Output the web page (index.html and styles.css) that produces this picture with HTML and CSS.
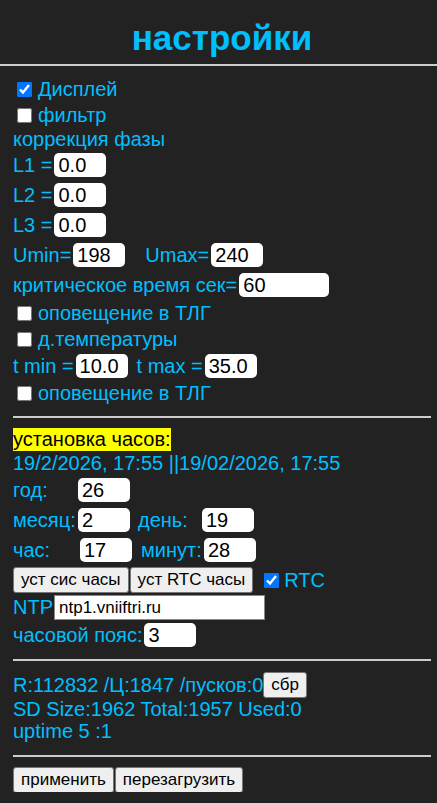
FILE: index.html
```html
<!DOCTYPE html>
<html lang="ru">
   <head>
      <meta charset="UTF-8" />
      <meta name="viewport" content="width=device-width, initial-scale=1.0"/>
      <title>настройки</title>
      <link rel="stylesheet" href="styles.css">
   </head>
   <body>
      <div class="title">настройки</div>
      <hr class="top-line">
      <div class="wrapper">
         <div class="row check-row"><input type="checkbox" class="check" id="display" checked><label for="display">Дисплей</label></div>
         <div class="row check-row"><input type="checkbox" class="check" id="filter"><label for="filter">фильтр</label></div>
         <div class="row phase-row">коррекция фазы</div>
         <div class="row">L1 =<input class="field" type="text" value="0.0"></div>
         <div class="row">L2 =<input class="field" type="text" value="0.0"></div>
         <div class="row">L3 =<input class="field" type="text" value="0.0"></div>
         <div class="row">Umin=<input class="field" type="text" value="198"><span class="umax">Umax=</span><input class="field" type="text" value="240"></div>
         <div class="row">критическое время сек=<input class="field wide" type="text" value="60"></div>
         <div class="row check-row"><input type="checkbox" class="check" id="tlg-volt"><label for="tlg-volt">оповещение в ТЛГ</label></div>
         <div class="row check-row"><input type="checkbox" class="check" id="temp"><label for="temp">д.температуры</label></div>
         <div class="row temp-row">t min =<input class="field" type="text" value="10.0"><span class="tmax">t max =</span><input class="field" type="text" value="35.0"></div>
         <div class="row check-row"><input type="checkbox" class="check" id="tlg-temp"><label for="tlg-temp">оповещение в ТЛГ</label></div>

         <hr class="line line-1">

         <div class="row text-row"><span class="mark">установка часов:</span></div>
         <div class="row date-row">19/2/2026, 17:55 ||19/02/2026, 17:55</div>
         <div class="row"><span class="lbl">год:</span><input class="field" type="text" value="26"></div>
         <div class="row"><span class="lbl">месяц:</span><input class="field" type="text" value="2"><span class="lbl lbl-2">день:</span><input class="field" type="text" value="19"></div>
         <div class="row"><span class="lbl lbl-hour">час:</span><input class="field" type="text" value="17"><span class="lbl lbl-2 lbl-min">минут:</span><input class="field" type="text" value="28"></div>
         <div class="row">
            <button class="btn">уст сис часы</button><button class="btn">уст RTC часы</button>
            <input type="checkbox" class="check rtc" id="rtc" checked><label for="rtc">RTC</label>
         </div>
         <div class="row ntp-row">NTP<input class="ntp" type="text" value="ntp1.vniiftri.ru"></div>
         <div class="row">часовой пояс:<input class="field" type="text" value="3"></div>

         <hr class="line line-2">

         <div class="row stat-row">R:112832 /Ц:1847 /пусков:0<button class="btn">сбр</button></div>
         <div class="row sd-row">SD Size:1962 Total:1957 Used:0</div>
         <div class="row text-row">uptime 5 :1</div>

         <hr class="line line-3">

         <div class="row foot-row"><button class="btn">применить</button><button class="btn">перезагрузить</button></div>
      </div>
   </body>
</html>
```

FILE: styles.css
```css
body {
background-color: #222;
color: #00bfff;
font-family: "Liberation Sans", Arial, sans-serif;
font-size: 20px;
margin: 0;
padding: 0;
}
.title {
font-size: 35px;
font-weight: bold;
text-align: center;
height: 46px;
padding: 18px 6px 0 13px;
}
.top-line {
border: none;
border-top: 2px solid #ccc;
margin: 0;
}
.wrapper {
padding: 10px 6px 0 13px;
}
.row {
display: flex;
align-items: center;
height: 30px;
white-space: pre;
}
.check-row {
height: 26px;
}
.phase-row {
height: 22px;
}
.temp-row {
height: 28px;
}
.text-row {
height: 23px;
}
.date-row {
height: 24px;
}
.ntp-row {
height: 25px;
}
.stat-row {
height: 26px;
}
.sd-row {
height: 22px;
}
.foot-row {
height: 25px;
}
.check {
width: 15px;
height: 15px;
margin: 0 6px 0 4px;
}
.check.rtc {
margin-left: 11px;
margin-right: 5px;
}
.field {
box-sizing: border-box;
width: 52px;
height: 24px;
margin: 0 2px;
padding: 0 4px;
border: none;
border-radius: 5px;
background-color: white;
color: black;
font-family: "Liberation Sans", Arial, sans-serif;
font-size: 20px;
}
.field.wide {
width: 90px;
}
.umax {
margin-left: 18px;
}
.tmax {
margin-left: 7px;
}
.lbl {
width: 63px;
}
.lbl-2 {
width: 62px;
margin-left: 6px;
}
.lbl-hour {
width: 65px;
}
.lbl-min {
width: 61px;
margin-left: 7px;
}
.mark {
background-color: yellow;
color: black;
}
.ntp {
box-sizing: border-box;
width: 211px;
height: 25px;
margin-left: 1px;
padding: 0 4px;
border: 1px solid #888;
background-color: white;
color: black;
font-family: "Liberation Sans", Arial, sans-serif;
font-size: 17px;
}
.btn {
background-color: #efefef;
color: black;
border: 1px solid #767676;
border-radius: 3px;
padding: 2px 7px;
font-family: "Liberation Sans", Arial, sans-serif;
font-size: 17px;
}
.btn + .btn {
margin-left: 1px;
}
.line {
border: none;
border-top: 2px solid #ccc;
margin: 10px 0;
}
.line-2 {
margin: 9px 0 11px 0;
}
.line-3 {
margin: 12px 0 10px 0;
}
```
